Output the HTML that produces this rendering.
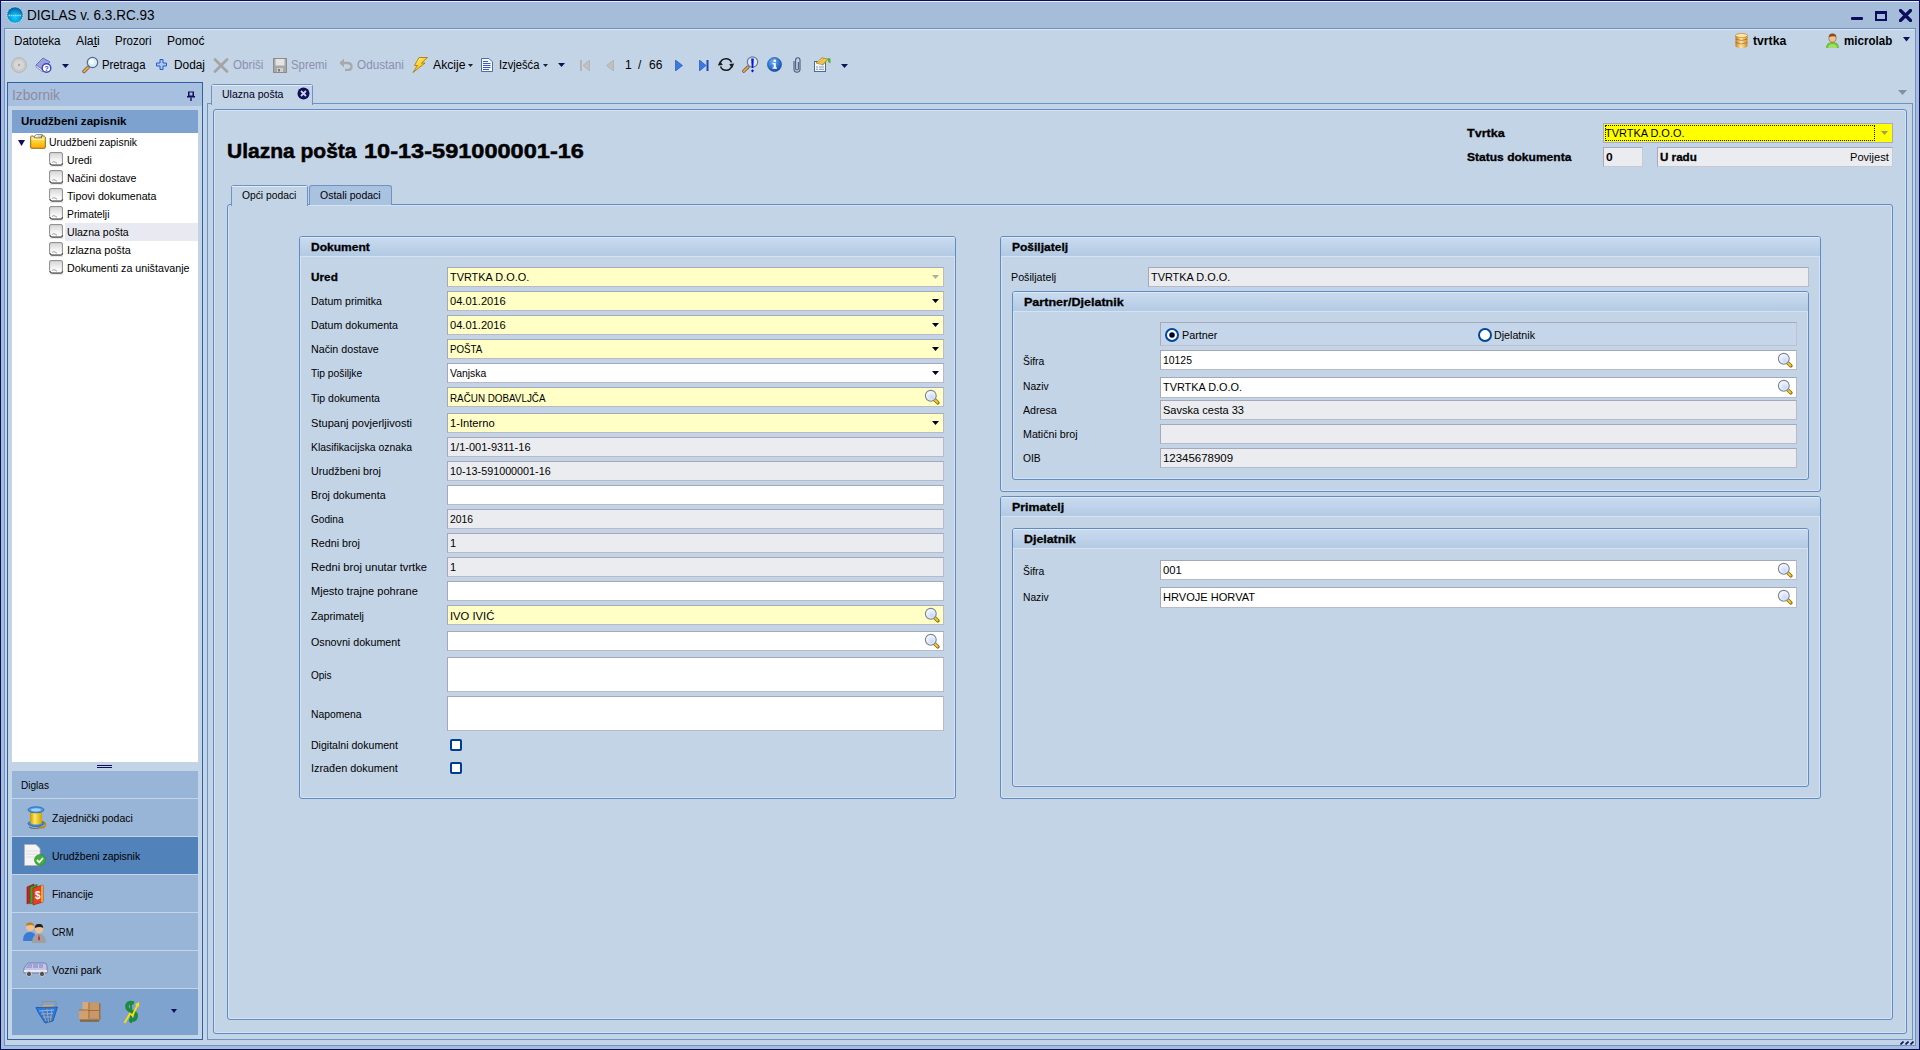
<!DOCTYPE html><html><head><meta charset="utf-8"><style>
html,body{margin:0;padding:0;}
body{width:1920px;height:1050px;position:relative;overflow:hidden;background:#a6bdda;font-family:"Liberation Sans",sans-serif;font-size:11px;color:#000;}
div{box-sizing:border-box;}
.t{position:absolute;white-space:nowrap;}
.b{font-weight:bold;transform:scaleX(1.09);transform-origin:0 0;}
.f{position:absolute;border:1px solid #a6a8ba;border-right-color:#b9b9c9;border-bottom-color:#b9b9c9;}
</style></head><body>
<div style="position:absolute;left:0px;top:0px;width:1920px;height:1050px;border:1px solid #0c0c60;background:#a6bdda;"></div>
<div style="position:absolute;left:1px;top:1px;width:1918px;height:1px;background:#e4ecf6;"></div>
<svg style="position:absolute;left:6px;top:6px" width="18" height="18" viewBox="0 0 18 18"><defs><radialGradient id="gi" cx="50%" cy="65%" r="60%"><stop offset="0" stop-color="#10d0ff"/><stop offset="0.6" stop-color="#0898d8"/><stop offset="1" stop-color="#0660a0"/></radialGradient></defs><circle cx="9" cy="9" r="8" fill="url(#gi)" stroke="#e0f0fa" stroke-width="0.8" stroke-dasharray="1.2 0.8"/><path d="M2.5 9.5 H15.5" stroke="#d0f0ff" stroke-width="1.6" stroke-dasharray="1.5 0.7" opacity="0.75"/></svg>
<div class="t" style="left:27px;top:5px;height:20px;line-height:20px;font-size:14px;color:#000;transform:scaleX(0.9655);transform-origin:0 0;">DIGLAS v. 6.3.RC.93</div>
<div style="position:absolute;left:1851px;top:17px;width:12px;height:3px;background:#0c0c60;border-radius:1px;"></div>
<div style="position:absolute;left:1875px;top:11px;width:12px;height:10px;border:2px solid #0c0c60;border-top-width:3px;"></div>
<svg style="position:absolute;left:1899px;top:9px" width="13" height="13" viewBox="0 0 13 13"><path d="M1.5 1.5 L11.5 11.5 M11.5 1.5 L1.5 11.5" stroke="#0c0c60" stroke-width="3.2" stroke-linecap="round"/></svg>
<div style="position:absolute;left:4px;top:28px;width:1912px;height:1018px;border:1px solid #6e93c3;background:#c3d4e7;"></div>
<div style="position:absolute;left:5px;top:29px;width:1910px;height:1px;background:#dce6f2;"></div>
<div class="t" style="left:14px;top:31px;height:20px;line-height:20px;font-size:12px;transform:scaleX(0.9674);transform-origin:0 0;">Datoteka</div>
<div class="t" style="left:76px;top:31px;height:20px;line-height:20px;font-size:12px;transform:scaleX(1.0182);transform-origin:0 0;">Alati</div>
<div class="t" style="left:115px;top:31px;height:20px;line-height:20px;font-size:12px;transform:scaleX(0.9591);transform-origin:0 0;">Prozori</div>
<div class="t" style="left:167px;top:31px;height:20px;line-height:20px;font-size:12px;transform:scaleX(1.0039);transform-origin:0 0;">Pomoć</div>
<div style="position:absolute;left:93px;top:46px;width:4px;height:1px;background:#000;"></div>
<svg style="position:absolute;left:1735px;top:33px" width="13" height="15" viewBox="0 0 13 15"><defs><linearGradient id="db" x1="0" x2="1"><stop offset="0" stop-color="#c87a1c"/><stop offset="0.45" stop-color="#ffe9a8"/><stop offset="1" stop-color="#d08a2a"/></linearGradient></defs><rect x="0.5" y="2" width="12" height="11" fill="url(#db)"/><ellipse cx="6.5" cy="2.5" rx="6" ry="2" fill="#ffe7a0" stroke="#b87320" stroke-width="0.6"/><ellipse cx="6.5" cy="13" rx="6" ry="2" fill="url(#db)"/><path d="M0.5 6 Q6.5 9 12.5 6 M0.5 9.5 Q6.5 12.5 12.5 9.5" stroke="#a8661a" stroke-width="0.7" fill="none"/></svg>
<div class="t" style="left:1753px;top:31px;height:20px;line-height:20px;font-size:12px;font-weight:bold;transform:scaleX(1.0178);transform-origin:0 0;">tvrtka</div>
<svg style="position:absolute;left:1825px;top:33px" width="15" height="15" viewBox="0 0 15 15"><path d="M1 15 Q1 9 7.5 9 Q14 9 14 15 Z" fill="#6fbf3a"/><path d="M3 15 Q3 11 7.5 11 Q12 11 12 15Z" fill="#9fe060"/><ellipse cx="7.5" cy="5" rx="3.6" ry="4.2" fill="#f0c090" stroke="#8a5a30" stroke-width="0.6"/><path d="M3.8 4 Q4 0.6 7.5 0.8 Q11 0.6 11.2 4 Q9 2.6 3.8 4Z" fill="#8a4a1a"/></svg>
<div class="t" style="left:1844px;top:31px;height:20px;line-height:20px;font-size:12px;font-weight:bold;transform:scaleX(0.9640);transform-origin:0 0;">microlab</div>
<svg style="position:absolute;left:1903px;top:37px" width="7" height="5" viewBox="0 0 7 5"><path d="M0 0 H7 L3.5 4.5Z" fill="#10105a"/></svg>
<svg style="position:absolute;left:11px;top:57px" width="16" height="16" viewBox="0 0 16 16"><circle cx="8" cy="8" r="7.5" fill="#c9c9c9" stroke="#b0b0b0" stroke-width="0.8"/><circle cx="8" cy="8" r="5" fill="#d6d6d6"/><circle cx="8" cy="8" r="1.2" fill="#a8a8a8"/></svg>
<svg style="position:absolute;left:35px;top:57px" width="17" height="16" viewBox="0 0 17 16"><path d="M1 8 L8 1 L15 5 L8 13 Z" fill="#9aa0e0" stroke="#5a5eb0" stroke-width="0.8"/><path d="M1 8 L1 10 L8 15 L8 13Z" fill="#e8e8f8" stroke="#5a5eb0" stroke-width="0.6"/><circle cx="11.5" cy="11" r="4.3" fill="#fff" stroke="#3a46c0" stroke-width="1.4"/><text x="9.6" y="13.8" font-size="7" font-family="Liberation Sans" font-weight="bold" fill="#3a46c0">?</text></svg>
<svg style="position:absolute;left:62px;top:64px" width="7" height="4" viewBox="0 0 7 4"><path d="M0 0 H7 L3.5 4Z" fill="#10105a"/></svg>
<svg style="position:absolute;left:81px;top:56px" width="18" height="18" viewBox="0 0 18 18"><path d="M3 15.5 L7 11.5" stroke="#6a5a40" stroke-width="3.4" stroke-linecap="round"/><path d="M3 15.5 L7 11.5" stroke="#f4a848" stroke-width="1.8" stroke-linecap="round"/><circle cx="11.5" cy="6.5" r="5.2" fill="#d4ecfc" stroke="#5a6a80" stroke-width="1.2"/><circle cx="10.5" cy="5.5" r="2.6" fill="#ffffff" opacity="0.85"/></svg>
<div class="t" style="left:102px;top:55px;height:20px;line-height:20px;font-size:12px;transform:scaleX(0.9438);transform-origin:0 0;">Pretraga</div>
<svg style="position:absolute;left:156px;top:59px" width="11" height="11" viewBox="0 0 11 11"><path d="M4 0.5 H7 V4 H10.5 V7 H7 V10.5 H4 V7 H0.5 V4 H4Z" fill="#a8c8f8" stroke="#2a5ac8" stroke-width="1"/></svg>
<div class="t" style="left:174px;top:55px;height:20px;line-height:20px;font-size:12px;transform:scaleX(0.9882);transform-origin:0 0;">Dodaj</div>
<svg style="position:absolute;left:213px;top:58px" width="16" height="15" viewBox="0 0 16 15"><path d="M2 1.5 L14 13.5 M14 1.5 L2 13.5" stroke="#a4a4a4" stroke-width="2.6" stroke-linecap="round"/></svg>
<div class="t" style="left:233px;top:55px;height:20px;line-height:20px;font-size:12px;color:#8d8fad;transform:scaleX(0.9722);transform-origin:0 0;">Obriši</div>
<svg style="position:absolute;left:273px;top:58px" width="14" height="15" viewBox="0 0 14 15"><rect x="0.5" y="0.5" width="13" height="14" fill="#a8a8a8" stroke="#8c8c8c" stroke-width="1"/><rect x="2.5" y="1" width="9" height="6.5" fill="#e4e4e4"/><rect x="4" y="10" width="6" height="4" fill="#d0d0d0"/><rect x="5" y="11" width="2" height="2.5" fill="#7a7a7a"/></svg>
<div class="t" style="left:291px;top:55px;height:20px;line-height:20px;font-size:12px;color:#8d8fad;transform:scaleX(0.9455);transform-origin:0 0;">Spremi</div>
<svg style="position:absolute;left:339px;top:58px" width="14" height="13" viewBox="0 0 14 13"><path d="M1 5 H8.5 Q12.5 5 12.5 8.5 Q12.5 12 8.5 12 H6" stroke="#a8a8a8" stroke-width="2.4" fill="none"/><path d="M0.5 5 L5 0.5 V9.5Z" fill="#a8a8a8"/></svg>
<div class="t" style="left:357px;top:55px;height:20px;line-height:20px;font-size:12px;color:#8d8fad;transform:scaleX(0.9781);transform-origin:0 0;">Odustani</div>
<svg style="position:absolute;left:412px;top:57px" width="16" height="16" viewBox="0 0 16 16"><defs><linearGradient id="lg1" x1="0" y1="0" x2="1" y2="1"><stop offset="0" stop-color="#fff6b0"/><stop offset="0.5" stop-color="#ffd020"/><stop offset="1" stop-color="#e09000"/></linearGradient></defs><path d="M7 0.5 H15.5 L9.5 6 H13 L1 15.5 L5.5 8.5 H2.5Z" fill="url(#lg1)" stroke="#a87000" stroke-width="0.8" stroke-linejoin="round"/></svg>
<div class="t" style="left:433px;top:55px;height:20px;line-height:20px;font-size:12px;transform:scaleX(1.0156);transform-origin:0 0;">Akcije</div>
<svg style="position:absolute;left:468px;top:64px" width="5" height="3" viewBox="0 0 5 3"><path d="M0 0 H5 L2.5 3Z" fill="#202030"/></svg>
<svg style="position:absolute;left:481px;top:58px" width="12" height="14" viewBox="0 0 12 14"><path d="M0.5 0.5 H8 L11.5 4 V13.5 H0.5Z" fill="#f4f8ff" stroke="#5a6a90" stroke-width="1"/><path d="M2 3.5 H7 M2 5.5 H9.5 M2 7.5 H9.5 M2 9.5 H9.5 M2 11.5 H8" stroke="#3a5ac8" stroke-width="1"/></svg>
<div class="t" style="left:499px;top:55px;height:20px;line-height:20px;font-size:12px;transform:scaleX(0.9325);transform-origin:0 0;">Izvješća</div>
<svg style="position:absolute;left:543px;top:64px" width="5" height="3" viewBox="0 0 5 3"><path d="M0 0 H5 L2.5 3Z" fill="#202030"/></svg>
<svg style="position:absolute;left:558px;top:63px" width="7" height="4" viewBox="0 0 7 4"><path d="M0 0 H7 L3.5 4Z" fill="#10105a"/></svg>
<svg style="position:absolute;left:580px;top:60px" width="10" height="11" viewBox="0 0 10 11"><rect x="0" y="0" width="2" height="11" fill="#b4b4b4"/><path d="M9.5 0 L3 5.5 L9.5 11Z" fill="#c0c0c0" stroke="#a8a8a8" stroke-width="0.6"/></svg>
<svg style="position:absolute;left:606px;top:60px" width="8" height="11" viewBox="0 0 8 11"><path d="M7.5 0 L0.5 5.5 L7.5 11Z" fill="#c0c0c0" stroke="#a8a8a8" stroke-width="0.6"/></svg>
<div class="t" style="left:625px;top:55px;height:20px;line-height:20px;font-size:12px;">1</div>
<div class="t" style="left:638px;top:55px;height:20px;line-height:20px;font-size:12px;">/</div>
<div class="t" style="left:649px;top:55px;height:20px;line-height:20px;font-size:12px;">66</div>
<svg style="position:absolute;left:675px;top:60px" width="8" height="11" viewBox="0 0 8 11"><path d="M0.5 0 L7.5 5.5 L0.5 11Z" fill="#3a7ae0" stroke="#1a4ab0" stroke-width="0.6"/></svg>
<svg style="position:absolute;left:699px;top:60px" width="10" height="11" viewBox="0 0 10 11"><path d="M0.5 0 L7 5.5 L0.5 11Z" fill="#3a7ae0" stroke="#1a4ab0" stroke-width="0.6"/><rect x="7.5" y="0" width="2" height="11" fill="#1a4ab0"/></svg>
<svg style="position:absolute;left:717px;top:56px" width="18" height="17" viewBox="0 0 18 17"><path d="M3.2 7 A6 6 0 0 1 14.5 6.5" stroke="#1a1a1a" stroke-width="1.5" fill="none"/><path d="M14.8 10 A6 6 0 0 1 3.5 10.5" stroke="#1a1a1a" stroke-width="1.5" fill="none"/><path d="M0.8 9.5 L3 5 L5.8 9Z" fill="#1a1a1a"/><path d="M12.2 8 L15 12.2 L17.2 7.5Z" fill="#1a1a1a"/></svg>
<svg style="position:absolute;left:742px;top:56px" width="17" height="18" viewBox="0 0 17 18"><path d="M1.8 15.2 L6 11" stroke="#6a5a40" stroke-width="3.2" stroke-linecap="round"/><path d="M1.8 15.2 L6 11" stroke="#f4a848" stroke-width="1.7" stroke-linecap="round"/><circle cx="10.5" cy="6" r="5.2" fill="#d4ecfc" stroke="#6a7a90" stroke-width="1.2"/><path d="M9.2 2.5 H11.8 L11.3 12 H9.7Z" fill="#1010e0"/><path d="M10.5 13.2 L12 14.8 L10.5 16.4 L9 14.8Z" fill="#1010e0"/></svg>
<svg style="position:absolute;left:767px;top:57px" width="15" height="15" viewBox="0 0 15 15"><defs><radialGradient id="ig" cx="40%" cy="30%" r="70%"><stop offset="0" stop-color="#6ab0ff"/><stop offset="1" stop-color="#1450b0"/></radialGradient></defs><circle cx="7.5" cy="7.5" r="7" fill="url(#ig)" stroke="#1a4090" stroke-width="0.6"/><circle cx="7.8" cy="3.8" r="1.4" fill="#fff"/><path d="M5.5 6 H8.8 V10.5 H10 V11.8 H5.5 V10.5 H6.7 V7.3 H5.5Z" fill="#fff"/></svg>
<svg style="position:absolute;left:792px;top:57px" width="10" height="16" viewBox="0 0 10 16"><path d="M2 4 V12 Q2 15.2 5 15.2 Q8 15.2 8 12 V3.5 Q8 0.8 5.8 0.8 Q3.6 0.8 3.6 3.5 V11.5 Q3.6 13 5 13 Q6.4 13 6.4 11.5 V5" stroke="#4a5a7a" stroke-width="1.1" fill="none"/></svg>
<svg style="position:absolute;left:814px;top:57px" width="17" height="15" viewBox="0 0 17 15"><rect x="0.5" y="4.5" width="11" height="10" fill="#f4f8ff" stroke="#4a6a98" stroke-width="1"/><path d="M2 10 H4 M5 10 H10 M2 12.3 H4 M5 12.3 H10" stroke="#7a90b8" stroke-width="1"/><path d="M2 6 L8 0.8 L14 2 L9 8Z" fill="#e0b030" stroke="#a07010" stroke-width="0.6"/><path d="M3.5 5 L9 1.5 M5 6.5 L11 2 M6.5 7.5 L12.5 2.3" stroke="#fff0a0" stroke-width="0.6"/><path d="M14 1 L16.5 1.5 V6.5 L14 5Z" fill="#50b040"/></svg>
<svg style="position:absolute;left:841px;top:64px" width="7" height="4" viewBox="0 0 7 4"><path d="M0 0 H7 L3.5 4Z" fill="#10105a"/></svg>
<div style="position:absolute;left:7px;top:82px;width:196px;height:958px;border:1px solid #2f60a2;background:#c3d4e7;"></div>
<div style="position:absolute;left:8px;top:83px;width:194px;height:23px;background:#a7c0df;"></div>
<div class="t" style="left:12px;top:84px;height:22px;line-height:22px;font-size:14px;color:#8f8a9e;transform:scaleX(0.9785);transform-origin:0 0;">Izbornik</div>
<svg style="position:absolute;left:187px;top:91px" width="8" height="10" viewBox="0 0 8 10"><path d="M1 0.5 H7 V5 H1Z M0 5 H8 V6.5 H0Z" fill="#10105a"/><rect x="2.5" y="1.5" width="3" height="3" fill="#a7c0df"/><rect x="3.3" y="6.5" width="1.4" height="3.5" fill="#10105a"/></svg>
<div style="position:absolute;left:12px;top:110px;width:186px;height:652px;background:#fff;"></div>
<div style="position:absolute;left:12px;top:110px;width:186px;height:23px;background:#7da2cf;"></div>
<div class="t" style="left:21px;top:111px;height:21px;line-height:21px;font-weight:bold;font-size:11px;transform:scaleX(1.0529);transform-origin:0 0;">Urudžbeni zapisnik</div>
<div style="position:absolute;left:65px;top:223px;width:133px;height:18px;background:#e9eaf1;"></div>
<svg style="position:absolute;left:18px;top:140px" width="7" height="6" viewBox="0 0 7 6"><path d="M0 0 H7 L3.5 6Z" fill="#10105a"/></svg>
<svg style="position:absolute;left:30px;top:133px" width="16" height="16" viewBox="0 0 16 16"><defs><linearGradient id="fg" x1="0" y1="0" x2="0" y2="1"><stop offset="0" stop-color="#fff4a0"/><stop offset="0.35" stop-color="#ffd840"/><stop offset="1" stop-color="#ffa800"/></linearGradient></defs><path d="M3.5 4 L6.5 1.5 H12.5 V7 H3.5Z" fill="#e8ecf4" stroke="#7a7a7a" stroke-width="0.8"/><rect x="8" y="2.5" width="4" height="3" fill="#c8ccd8"/><path d="M0.7 3.8 Q0.7 3 1.5 3 H3.5 L5 5 H11.5 V2.8 Q15.3 2.8 15.3 4 V14.5 Q15.3 15.3 14.5 15.3 H1.5 Q0.7 15.3 0.7 14.5Z" fill="url(#fg)" stroke="#8a5a00" stroke-width="0.9"/><rect x="1.5" y="5.5" width="13" height="1.5" fill="#fff8c0" opacity="0.7"/></svg>
<div class="t" style="left:49px;top:133px;height:18px;line-height:18px;transform:scaleX(0.9463);transform-origin:0 0;">Urudžbeni zapisnik</div>
<svg style="position:absolute;left:49px;top:152px" width="15" height="15" viewBox="0 0 15 15"><defs><linearGradient id="dg0" x1="0" y1="0" x2="0" y2="1"><stop offset="0" stop-color="#d4d4d4"/><stop offset="0.6" stop-color="#f4f4f4"/><stop offset="1" stop-color="#ffffff"/></linearGradient></defs><path d="M0.6 2 Q0.6 0.6 2 0.6 H12 Q13.4 0.6 13.4 2 V11 Q13.4 12.8 11.6 12.8 H3 Q0.6 12.8 0.6 10.5Z" fill="url(#dg0)" stroke="#8a8a8a" stroke-width="1"/><path d="M0.8 11 Q1.5 13.4 3.2 13.4 H11.6 Q13.6 13.4 13.6 11" stroke="#5a5a5a" stroke-width="1.1" fill="none"/><path d="M3 10.5 Q4.5 9 6 10 Q7 10.6 8 11.2" stroke="#8a8a8a" stroke-width="0.8" fill="none"/><rect x="1" y="13.8" width="13" height="1" fill="#e4e4e4"/></svg>
<div class="t" style="left:67px;top:151px;height:18px;line-height:18px;transform:scaleX(0.9487);transform-origin:0 0;">Uredi</div>
<svg style="position:absolute;left:49px;top:170px" width="15" height="15" viewBox="0 0 15 15"><defs><linearGradient id="dg1" x1="0" y1="0" x2="0" y2="1"><stop offset="0" stop-color="#d4d4d4"/><stop offset="0.6" stop-color="#f4f4f4"/><stop offset="1" stop-color="#ffffff"/></linearGradient></defs><path d="M0.6 2 Q0.6 0.6 2 0.6 H12 Q13.4 0.6 13.4 2 V11 Q13.4 12.8 11.6 12.8 H3 Q0.6 12.8 0.6 10.5Z" fill="url(#dg1)" stroke="#8a8a8a" stroke-width="1"/><path d="M0.8 11 Q1.5 13.4 3.2 13.4 H11.6 Q13.6 13.4 13.6 11" stroke="#5a5a5a" stroke-width="1.1" fill="none"/><path d="M3 10.5 Q4.5 9 6 10 Q7 10.6 8 11.2" stroke="#8a8a8a" stroke-width="0.8" fill="none"/><rect x="1" y="13.8" width="13" height="1" fill="#e4e4e4"/></svg>
<div class="t" style="left:67px;top:169px;height:18px;line-height:18px;transform:scaleX(0.9627);transform-origin:0 0;">Načini dostave</div>
<svg style="position:absolute;left:49px;top:188px" width="15" height="15" viewBox="0 0 15 15"><defs><linearGradient id="dg2" x1="0" y1="0" x2="0" y2="1"><stop offset="0" stop-color="#d4d4d4"/><stop offset="0.6" stop-color="#f4f4f4"/><stop offset="1" stop-color="#ffffff"/></linearGradient></defs><path d="M0.6 2 Q0.6 0.6 2 0.6 H12 Q13.4 0.6 13.4 2 V11 Q13.4 12.8 11.6 12.8 H3 Q0.6 12.8 0.6 10.5Z" fill="url(#dg2)" stroke="#8a8a8a" stroke-width="1"/><path d="M0.8 11 Q1.5 13.4 3.2 13.4 H11.6 Q13.6 13.4 13.6 11" stroke="#5a5a5a" stroke-width="1.1" fill="none"/><path d="M3 10.5 Q4.5 9 6 10 Q7 10.6 8 11.2" stroke="#8a8a8a" stroke-width="0.8" fill="none"/><rect x="1" y="13.8" width="13" height="1" fill="#e4e4e4"/></svg>
<div class="t" style="left:67px;top:187px;height:18px;line-height:18px;transform:scaleX(0.9667);transform-origin:0 0;">Tipovi dokumenata</div>
<svg style="position:absolute;left:49px;top:206px" width="15" height="15" viewBox="0 0 15 15"><defs><linearGradient id="dg3" x1="0" y1="0" x2="0" y2="1"><stop offset="0" stop-color="#d4d4d4"/><stop offset="0.6" stop-color="#f4f4f4"/><stop offset="1" stop-color="#ffffff"/></linearGradient></defs><path d="M0.6 2 Q0.6 0.6 2 0.6 H12 Q13.4 0.6 13.4 2 V11 Q13.4 12.8 11.6 12.8 H3 Q0.6 12.8 0.6 10.5Z" fill="url(#dg3)" stroke="#8a8a8a" stroke-width="1"/><path d="M0.8 11 Q1.5 13.4 3.2 13.4 H11.6 Q13.6 13.4 13.6 11" stroke="#5a5a5a" stroke-width="1.1" fill="none"/><path d="M3 10.5 Q4.5 9 6 10 Q7 10.6 8 11.2" stroke="#8a8a8a" stroke-width="0.8" fill="none"/><rect x="1" y="13.8" width="13" height="1" fill="#e4e4e4"/></svg>
<div class="t" style="left:67px;top:205px;height:18px;line-height:18px;transform:scaleX(0.9382);transform-origin:0 0;">Primatelji</div>
<svg style="position:absolute;left:49px;top:224px" width="15" height="15" viewBox="0 0 15 15"><defs><linearGradient id="dg4" x1="0" y1="0" x2="0" y2="1"><stop offset="0" stop-color="#d4d4d4"/><stop offset="0.6" stop-color="#f4f4f4"/><stop offset="1" stop-color="#ffffff"/></linearGradient></defs><path d="M0.6 2 Q0.6 0.6 2 0.6 H12 Q13.4 0.6 13.4 2 V11 Q13.4 12.8 11.6 12.8 H3 Q0.6 12.8 0.6 10.5Z" fill="url(#dg4)" stroke="#8a8a8a" stroke-width="1"/><path d="M0.8 11 Q1.5 13.4 3.2 13.4 H11.6 Q13.6 13.4 13.6 11" stroke="#5a5a5a" stroke-width="1.1" fill="none"/><path d="M3 10.5 Q4.5 9 6 10 Q7 10.6 8 11.2" stroke="#8a8a8a" stroke-width="0.8" fill="none"/><rect x="1" y="13.8" width="13" height="1" fill="#e4e4e4"/></svg>
<div class="t" style="left:67px;top:223px;height:18px;line-height:18px;transform:scaleX(0.9617);transform-origin:0 0;">Ulazna pošta</div>
<svg style="position:absolute;left:49px;top:242px" width="15" height="15" viewBox="0 0 15 15"><defs><linearGradient id="dg5" x1="0" y1="0" x2="0" y2="1"><stop offset="0" stop-color="#d4d4d4"/><stop offset="0.6" stop-color="#f4f4f4"/><stop offset="1" stop-color="#ffffff"/></linearGradient></defs><path d="M0.6 2 Q0.6 0.6 2 0.6 H12 Q13.4 0.6 13.4 2 V11 Q13.4 12.8 11.6 12.8 H3 Q0.6 12.8 0.6 10.5Z" fill="url(#dg5)" stroke="#8a8a8a" stroke-width="1"/><path d="M0.8 11 Q1.5 13.4 3.2 13.4 H11.6 Q13.6 13.4 13.6 11" stroke="#5a5a5a" stroke-width="1.1" fill="none"/><path d="M3 10.5 Q4.5 9 6 10 Q7 10.6 8 11.2" stroke="#8a8a8a" stroke-width="0.8" fill="none"/><rect x="1" y="13.8" width="13" height="1" fill="#e4e4e4"/></svg>
<div class="t" style="left:67px;top:241px;height:18px;line-height:18px;transform:scaleX(0.9839);transform-origin:0 0;">Izlazna pošta</div>
<svg style="position:absolute;left:49px;top:260px" width="15" height="15" viewBox="0 0 15 15"><defs><linearGradient id="dg6" x1="0" y1="0" x2="0" y2="1"><stop offset="0" stop-color="#d4d4d4"/><stop offset="0.6" stop-color="#f4f4f4"/><stop offset="1" stop-color="#ffffff"/></linearGradient></defs><path d="M0.6 2 Q0.6 0.6 2 0.6 H12 Q13.4 0.6 13.4 2 V11 Q13.4 12.8 11.6 12.8 H3 Q0.6 12.8 0.6 10.5Z" fill="url(#dg6)" stroke="#8a8a8a" stroke-width="1"/><path d="M0.8 11 Q1.5 13.4 3.2 13.4 H11.6 Q13.6 13.4 13.6 11" stroke="#5a5a5a" stroke-width="1.1" fill="none"/><path d="M3 10.5 Q4.5 9 6 10 Q7 10.6 8 11.2" stroke="#8a8a8a" stroke-width="0.8" fill="none"/><rect x="1" y="13.8" width="13" height="1" fill="#e4e4e4"/></svg>
<div class="t" style="left:67px;top:259px;height:18px;line-height:18px;transform:scaleX(0.9722);transform-origin:0 0;">Dokumenti za uništavanje</div>
<div style="position:absolute;left:97px;top:765px;width:15px;height:1px;background:#10105a;"></div>
<div style="position:absolute;left:97px;top:767px;width:15px;height:1px;background:#10105a;"></div>
<div style="position:absolute;left:12px;top:771px;width:186px;height:27px;background:#98b4d6;"></div>
<div class="t" style="left:21px;top:775px;height:20px;line-height:20px;transform:scaleX(0.9128);transform-origin:0 0;">Diglas</div>
<div style="position:absolute;left:12px;top:799px;width:186px;height:37px;background:#98b4d6;"></div>
<div class="t" style="left:52px;top:808px;height:20px;line-height:20px;transform:scaleX(0.9500);transform-origin:0 0;">Zajednički podaci</div>
<div style="position:absolute;left:12px;top:837px;width:186px;height:37px;background:#5282ba;"></div>
<div class="t" style="left:52px;top:846px;height:20px;line-height:20px;transform:scaleX(0.9485);transform-origin:0 0;">Urudžbeni zapisnik</div>
<div style="position:absolute;left:12px;top:875px;width:186px;height:37px;background:#98b4d6;"></div>
<div class="t" style="left:52px;top:884px;height:20px;line-height:20px;transform:scaleX(0.9365);transform-origin:0 0;">Financije</div>
<div style="position:absolute;left:12px;top:913px;width:186px;height:37px;background:#98b4d6;"></div>
<div class="t" style="left:52px;top:922px;height:20px;line-height:20px;transform:scaleX(0.8644);transform-origin:0 0;">CRM</div>
<div style="position:absolute;left:12px;top:951px;width:186px;height:37px;background:#98b4d6;"></div>
<div class="t" style="left:52px;top:960px;height:20px;line-height:20px;transform:scaleX(0.9588);transform-origin:0 0;">Vozni park</div>
<div style="position:absolute;left:12px;top:989px;width:186px;height:46px;background:#7ea3cf;"></div>
<svg style="position:absolute;left:26px;top:806px" width="22" height="24" viewBox="0 0 22 24"><defs><linearGradient id="sp" x1="0" x2="1"><stop offset="0" stop-color="#c89800"/><stop offset="0.4" stop-color="#ffe860"/><stop offset="1" stop-color="#d0a000"/></linearGradient></defs><path d="M3 21 Q8 24 16 21" stroke="#707070" stroke-width="1.2" fill="none"/><path d="M14 15 Q21 16 19 20 Q17 23 12 21" stroke="#c08a00" stroke-width="1.6" fill="none"/><rect x="4" y="4" width="12" height="14" fill="url(#sp)"/><ellipse cx="10" cy="17.5" rx="8" ry="3" fill="#3a8ae0" stroke="#1a5aa0" stroke-width="0.7"/><ellipse cx="10" cy="16.5" rx="6" ry="2" fill="url(#sp)"/><rect x="4" y="4" width="12" height="12.5" fill="url(#sp)"/><ellipse cx="10" cy="3.8" rx="8" ry="3" fill="#4a9af0" stroke="#1a5aa0" stroke-width="0.7"/><ellipse cx="10" cy="3.8" rx="5" ry="1.6" fill="#a0d0ff"/></svg>
<svg style="position:absolute;left:23px;top:843px" width="24" height="24" viewBox="0 0 24 24"><path d="M1.5 1.5 H13 L17 5.5 V22.5 H1.5Z" fill="#f4f4f4" stroke="#b0b0b0" stroke-width="0.8"/><path d="M3 8 H15 M3 11 H15 M3 14 H12" stroke="#d8d8d8" stroke-width="0.8"/><circle cx="17" cy="17" r="5.5" fill="#3fb03a" stroke="#2a8a2a" stroke-width="0.6"/><path d="M14 17 L16.3 19.3 L20 15" stroke="#fff" stroke-width="1.8" fill="none"/></svg>
<svg style="position:absolute;left:26px;top:882px" width="20" height="24" viewBox="0 0 20 24"><path d="M1 5 L8 2 V19 L1 22Z" fill="#d02020" stroke="#801010" stroke-width="0.6"/><path d="M4 5 L11 2.5 V19.5 L4 22Z" fill="#40a030" stroke="#206010" stroke-width="0.6"/><path d="M7 6 L17 3 V20 L7 23Z" fill="#e84020" stroke="#901808" stroke-width="0.6"/><path d="M15 3.5 L17 3 V20 L15 20.6Z" fill="#ffa020"/><text x="9" y="17" font-size="10" font-weight="bold" fill="#fff" font-family="Liberation Sans">$</text></svg>
<svg style="position:absolute;left:23px;top:921px" width="24" height="22" viewBox="0 0 24 22"><circle cx="7" cy="6" r="4" fill="#f0c090"/><path d="M3 5 Q3 1 7 1.5 Q11 1 11 5 Q8 3 3 5Z" fill="#c08020"/><path d="M0 20 Q0 11 7 11 Q13 11 13 18 V20Z" fill="#3a7ad0"/><circle cx="16" cy="8" r="4.2" fill="#f0c090"/><path d="M11.8 7 Q12 2.5 16 3 Q20 2.5 20.2 7 Q17 5 11.8 7Z" fill="#202020"/><path d="M9 22 Q9 13 16 13 Q23 13 23 22Z" fill="#a0a0a0"/><path d="M16 13 L15 18 L16 20 L17 18Z" fill="#d02020"/></svg>
<svg style="position:absolute;left:23px;top:960px" width="25" height="18" viewBox="0 0 25 18"><path d="M1 13 V8 L5 3 H21 Q24 3 24 6 V13Z" fill="#c4c4e4" stroke="#7070a0" stroke-width="0.8"/><path d="M5.5 4 L2.5 8 H9 V4Z M10 4 H15 V8 H10Z M16 4 H20 V8 H16Z" fill="#9aa4d8"/><rect x="1" y="10" width="23" height="2" fill="#e8e8f8"/><circle cx="6" cy="14" r="2.6" fill="#505050" stroke="#e0e0e0" stroke-width="0.8"/><circle cx="19" cy="14" r="2.6" fill="#505050" stroke="#e0e0e0" stroke-width="0.8"/></svg>
<svg style="position:absolute;left:35px;top:1000px" width="25" height="24" viewBox="0 0 25 24"><path d="M7 6 V1.5 H21 V6" stroke="#909090" stroke-width="1" fill="none"/><path d="M4 8 L9 5 H18 L21 8Z" fill="#d8a868"/><path d="M1 7.5 L22.5 7 L18 21 L10 23 L3 12Z" fill="#2a7ae0" stroke="#1a50b0" stroke-width="0.8"/><path d="M4 11 L19 10 M6 14 L18 13.5 M8 17 L17 17" stroke="#80c0ff" stroke-width="0.9"/><path d="M7 10 L11 21 M12 9 L13.5 22 M17 9 L15.5 21" stroke="#d8a060" stroke-width="1.2" opacity="0.8"/></svg>
<svg style="position:absolute;left:78px;top:1001px" width="24" height="22" viewBox="0 0 24 22"><path d="M0.5 17.5 L3 20.5 H21 L23 17.5Z" fill="#a08050"/><path d="M2 20 H21" stroke="#705030" stroke-width="1"/><rect x="1" y="9" width="10" height="9" fill="#d0a070"/><rect x="10" y="1.5" width="11" height="16" fill="#c89868"/><rect x="4.5" y="1" width="6" height="8" fill="#d8a878"/><path d="M10 9.5 H21 M11 1.5 V17.5 M1 9 H10" stroke="#8a6030" stroke-width="0.7"/><path d="M21 1.5 L22.5 3 V18 L21 17.5Z" fill="#987048"/></svg>
<svg style="position:absolute;left:123px;top:1000px" width="18" height="24" viewBox="0 0 18 24"><path d="M11 3 Q4 1.5 4 6.5 Q4 10 9 11.5 Q14 13 13 17 Q12 21 6 20" stroke="#1e8a40" stroke-width="3.6" fill="none"/><path d="M8 1 V23" stroke="#1e8a40" stroke-width="2"/><path d="M1.5 23 L7 13.5 L9.5 15.5 L14.5 5" stroke="#ffe000" stroke-width="1.8" fill="none"/><path d="M12 4.5 L16 2 L16.2 7Z" fill="#ffe000"/></svg>
<svg style="position:absolute;left:171px;top:1009px" width="6" height="4" viewBox="0 0 6 4"><path d="M0 0 H6 L3.0 4Z" fill="#10105a"/></svg>
<div style="position:absolute;left:207px;top:103px;width:1706px;height:937px;border:1px solid #6e93c3;background:#c3d4e7;"></div>
<div style="position:absolute;left:211px;top:84px;width:102px;height:21px;border:1px solid #6e93c3;border-bottom:none;border-radius:3px 3px 0 0;background:#c3d4e7;"></div>
<div style="position:absolute;left:212px;top:85px;width:100px;height:1px;background:#e2ebf6;"></div>
<div class="t" style="left:222px;top:84px;height:20px;line-height:20px;font-size:11px;color:#000018;transform:scaleX(0.9570);transform-origin:0 0;">Ulazna pošta</div>
<svg style="position:absolute;left:297px;top:87px" width="13" height="13" viewBox="0 0 13 13"><circle cx="6.5" cy="6.5" r="6" fill="#10105a"/><path d="M4 4 L9 9 M9 4 L4 9" stroke="#c8d4f0" stroke-width="1.8"/></svg>
<svg style="position:absolute;left:1898px;top:90px" width="9" height="5" viewBox="0 0 9 5"><path d="M0 0 H9 L4.5 5Z" fill="#8090a8"/></svg>
<div style="position:absolute;left:213px;top:109px;width:1694px;height:925px;border:1px solid #5f8cc5;border-radius:3px;background:#c3d4e7;box-shadow:inset 0 0 0 1px #d6e2ef;"></div>
<div class="t" style="left:227px;top:138px;height:26px;line-height:26px;font-size:21px;font-weight:bold;-webkit-text-stroke:0.5px #000;">Ulazna pošta</div>
<div class="t" style="left:364px;top:138px;height:26px;line-height:26px;font-size:21px;font-weight:bold;-webkit-text-stroke:0.5px #000;transform:scaleX(1.121);transform-origin:0 0;">10-13-591000001-16</div>
<div class="t" style="left:1467px;top:123px;height:20px;line-height:20px;font-weight:bold;-webkit-text-stroke:0.3px #000;transform:scaleX(1.1395);transform-origin:0 0;">Tvrtka</div>
<div class="t" style="left:1467px;top:147px;height:20px;line-height:20px;font-weight:bold;-webkit-text-stroke:0.3px #000;transform:scaleX(1.0942);transform-origin:0 0;">Status dokumenta</div>
<div style="position:absolute;left:1603px;top:123px;width:290px;height:20px;background:#ffff00;border:1px solid #a9a9bd;"></div>
<div style="position:absolute;left:1605px;top:125px;width:270px;height:16px;border:1px dotted #101010;"></div>
<div class="t" style="left:1605px;top:123px;height:20px;line-height:20px;color:#000;transform:scaleX(0.9952);transform-origin:0 0;">TVRTKA D.O.O.</div>
<svg style="position:absolute;left:1881px;top:131px" width="7" height="4" viewBox="0 0 7 4"><path d="M0 0 H7 L3.5 4Z" fill="#9a9a6a"/></svg>
<div style="position:absolute;left:1603px;top:147px;width:40px;height:20px;background:#ebecf0;border:1px solid #a9a9bd;border-right-color:#c9c9d3;border-bottom-color:#c9c9d3;"></div>
<div class="t" style="left:1606px;top:147px;height:20px;line-height:20px;font-weight:bold;transform:scaleX(1.09);transform-origin:0 0;">0</div>
<div style="position:absolute;left:1657px;top:147px;width:236px;height:20px;background:#ebecf0;border:1px solid #a9a9bd;border-right-color:#c9c9d3;border-bottom-color:#c9c9d3;"></div>
<div class="t" style="left:1660px;top:147px;height:20px;line-height:20px;font-weight:bold;-webkit-text-stroke:0.3px #000;transform:scaleX(1.0563);transform-origin:0 0;">U radu</div>
<div class="t" style="left:1850px;top:147px;height:20px;line-height:20px;transform:scaleX(1.0058);transform-origin:0 0;">Povijest</div>
<div style="position:absolute;left:227px;top:204px;width:1666px;height:816px;border:1px solid #5f8cc5;border-radius:3px;background:#c3d4e7;box-shadow:inset 0 0 0 1px #d6e2ef;"></div>
<div style="position:absolute;left:309px;top:185px;width:83px;height:20px;border:1px solid #6e93c3;border-bottom:none;border-radius:3px 3px 0 0;background:#a9c2e0;"></div>
<div style="position:absolute;left:231px;top:185px;width:77px;height:21px;border:1px solid #6e93c3;border-bottom:none;border-radius:3px 3px 0 0;background:#c3d4e7;"></div>
<div style="position:absolute;left:232px;top:186px;width:75px;height:1px;background:#e2ebf6;"></div>
<div class="t" style="left:242px;top:185px;height:20px;line-height:20px;transform:scaleX(0.9353);transform-origin:0 0;">Opći podaci</div>
<div class="t" style="left:320px;top:185px;height:20px;line-height:20px;transform:scaleX(0.9538);transform-origin:0 0;">Ostali podaci</div>
<div style="position:absolute;left:299px;top:236px;width:657px;height:563px;border:1px solid #5f8cc5;border-radius:3px;background:#c3d4e7;box-shadow:inset 0 0 0 1px #d6e2ef;"></div>
<div style="position:absolute;left:300px;top:237px;width:655px;height:19px;background:linear-gradient(#c9daee,#b3cae4);border-top:1px solid #dfe9f5;border-radius:2px 2px 0 0;"></div>
<div style="position:absolute;left:300px;top:256px;width:655px;height:1px;background:#d6e2ef;"></div>
<div class="t" style="left:311px;top:237px;height:20px;line-height:20px;font-weight:bold;-webkit-text-stroke:0.3px #000;transform:scaleX(1.0932);transform-origin:0 0;">Dokument</div>
<div class="t" style="left:311px;top:267px;height:20px;line-height:20px;font-weight:bold;-webkit-text-stroke:0.3px #000;transform:scaleX(1.0722);transform-origin:0 0;">Ured</div>
<div class="f" style="left:447px;top:267px;width:497px;height:20px;background:#ffffc6;"></div>
<div class="t" style="left:450px;top:267px;height:20px;line-height:20px;transform:scaleX(0.9914);transform-origin:0 0;">TVRTKA D.O.O.</div>
<svg style="position:absolute;left:932px;top:275px" width="7" height="4" viewBox="0 0 7 4"><path d="M0 0 H7 L3.5 4Z" fill="#a8b0a8"/></svg>
<div class="t" style="left:311px;top:291px;height:20px;line-height:20px;transform:scaleX(0.9593);transform-origin:0 0;">Datum primitka</div>
<div class="f" style="left:447px;top:291px;width:497px;height:20px;background:#ffffc6;"></div>
<div class="t" style="left:450px;top:291px;height:20px;line-height:20px;transform:scaleX(1.0099);transform-origin:0 0;">04.01.2016</div>
<svg style="position:absolute;left:932px;top:299px" width="7" height="4" viewBox="0 0 7 4"><path d="M0 0 H7 L3.5 4Z" fill="#000020"/></svg>
<div class="t" style="left:311px;top:315px;height:20px;line-height:20px;transform:scaleX(0.9675);transform-origin:0 0;">Datum dokumenta</div>
<div class="f" style="left:447px;top:315px;width:497px;height:20px;background:#ffffc6;"></div>
<div class="t" style="left:450px;top:315px;height:20px;line-height:20px;transform:scaleX(1.0099);transform-origin:0 0;">04.01.2016</div>
<svg style="position:absolute;left:932px;top:323px" width="7" height="4" viewBox="0 0 7 4"><path d="M0 0 H7 L3.5 4Z" fill="#000020"/></svg>
<div class="t" style="left:311px;top:339px;height:20px;line-height:20px;transform:scaleX(0.9706);transform-origin:0 0;">Način dostave</div>
<div class="f" style="left:447px;top:339px;width:497px;height:20px;background:#ffffc6;"></div>
<div class="t" style="left:450px;top:339px;height:20px;line-height:20px;transform:scaleX(0.8877);transform-origin:0 0;">POŠTA</div>
<svg style="position:absolute;left:932px;top:347px" width="7" height="4" viewBox="0 0 7 4"><path d="M0 0 H7 L3.5 4Z" fill="#000020"/></svg>
<div class="t" style="left:311px;top:363px;height:20px;line-height:20px;transform:scaleX(0.9380);transform-origin:0 0;">Tip pošiljke</div>
<div class="f" style="left:447px;top:363px;width:497px;height:20px;background:#ffffff;"></div>
<div class="t" style="left:450px;top:363px;height:20px;line-height:20px;transform:scaleX(0.9457);transform-origin:0 0;">Vanjska</div>
<svg style="position:absolute;left:932px;top:371px" width="7" height="4" viewBox="0 0 7 4"><path d="M0 0 H7 L3.5 4Z" fill="#000020"/></svg>
<div class="t" style="left:311px;top:388px;height:20px;line-height:20px;transform:scaleX(0.9529);transform-origin:0 0;">Tip dokumenta</div>
<div class="f" style="left:447px;top:387px;width:497px;height:20px;background:#ffffc6;"></div>
<div class="t" style="left:450px;top:388px;height:20px;line-height:20px;transform:scaleX(0.8944);transform-origin:0 0;">RAČUN DOBAVLJČA</div>
<svg style="position:absolute;left:924px;top:389px" width="16" height="16" viewBox="0 0 16 16"><defs><radialGradient id="sg924389" cx="60%" cy="65%" r="70%"><stop offset="0" stop-color="#c8d8f8"/><stop offset="1" stop-color="#ffffff"/></radialGradient></defs><path d="M10.5 10.5 L13.8 13.8" stroke="#8a6a10" stroke-width="3.6" stroke-linecap="round"/><path d="M10.8 10.8 L13.5 13.5" stroke="#f0c830" stroke-width="2" stroke-linecap="round"/><circle cx="6.8" cy="6.8" r="5.4" fill="url(#sg924389)" stroke="#7a8490" stroke-width="1.1"/></svg>
<div class="t" style="left:311px;top:413px;height:20px;line-height:20px;transform:scaleX(1.0072);transform-origin:0 0;">Stupanj povjerljivosti</div>
<div class="f" style="left:447px;top:413px;width:497px;height:20px;background:#ffffc6;"></div>
<div class="t" style="left:450px;top:413px;height:20px;line-height:20px;transform:scaleX(1.0132);transform-origin:0 0;">1-Interno</div>
<svg style="position:absolute;left:932px;top:421px" width="7" height="4" viewBox="0 0 7 4"><path d="M0 0 H7 L3.5 4Z" fill="#000020"/></svg>
<div class="t" style="left:311px;top:437px;height:20px;line-height:20px;transform:scaleX(0.9434);transform-origin:0 0;">Klasifikacijska oznaka</div>
<div class="f" style="left:447px;top:437px;width:497px;height:20px;background:#ebecf0;"></div>
<div class="t" style="left:450px;top:437px;height:20px;line-height:20px;transform:scaleX(0.9996);transform-origin:0 0;">1/1-001-9311-16</div>
<div class="t" style="left:311px;top:461px;height:20px;line-height:20px;transform:scaleX(0.9781);transform-origin:0 0;">Urudžbeni broj</div>
<div class="f" style="left:447px;top:461px;width:497px;height:20px;background:#ebecf0;"></div>
<div class="t" style="left:450px;top:461px;height:20px;line-height:20px;transform:scaleX(0.9797);transform-origin:0 0;">10-13-591000001-16</div>
<div class="t" style="left:311px;top:485px;height:20px;line-height:20px;transform:scaleX(0.9678);transform-origin:0 0;">Broj dokumenta</div>
<div class="f" style="left:447px;top:485px;width:497px;height:20px;background:#ffffff;"></div>
<div class="t" style="left:311px;top:509px;height:20px;line-height:20px;transform:scaleX(0.9193);transform-origin:0 0;">Godina</div>
<div class="f" style="left:447px;top:509px;width:497px;height:20px;background:#ebecf0;"></div>
<div class="t" style="left:450px;top:509px;height:20px;line-height:20px;transform:scaleX(0.9368);transform-origin:0 0;">2016</div>
<div class="t" style="left:311px;top:533px;height:20px;line-height:20px;transform:scaleX(0.9768);transform-origin:0 0;">Redni broj</div>
<div class="f" style="left:447px;top:533px;width:497px;height:20px;background:#ebecf0;"></div>
<div class="t" style="left:450px;top:533px;height:20px;line-height:20px;">1</div>
<div class="t" style="left:311px;top:557px;height:20px;line-height:20px;transform:scaleX(1.0146);transform-origin:0 0;">Redni broj unutar tvrtke</div>
<div class="f" style="left:447px;top:557px;width:497px;height:20px;background:#ebecf0;"></div>
<div class="t" style="left:450px;top:557px;height:20px;line-height:20px;">1</div>
<div class="t" style="left:311px;top:581px;height:20px;line-height:20px;transform:scaleX(1.0037);transform-origin:0 0;">Mjesto trajne pohrane</div>
<div class="f" style="left:447px;top:581px;width:497px;height:20px;background:#ffffff;"></div>
<div class="t" style="left:311px;top:606px;height:20px;line-height:20px;transform:scaleX(0.9737);transform-origin:0 0;">Zaprimatelj</div>
<div class="f" style="left:447px;top:605px;width:497px;height:20px;background:#ffffc6;"></div>
<div class="t" style="left:450px;top:606px;height:20px;line-height:20px;transform:scaleX(1.0211);transform-origin:0 0;">IVO IVIĆ</div>
<svg style="position:absolute;left:924px;top:607px" width="16" height="16" viewBox="0 0 16 16"><defs><radialGradient id="sg924607" cx="60%" cy="65%" r="70%"><stop offset="0" stop-color="#c8d8f8"/><stop offset="1" stop-color="#ffffff"/></radialGradient></defs><path d="M10.5 10.5 L13.8 13.8" stroke="#8a6a10" stroke-width="3.6" stroke-linecap="round"/><path d="M10.8 10.8 L13.5 13.5" stroke="#f0c830" stroke-width="2" stroke-linecap="round"/><circle cx="6.8" cy="6.8" r="5.4" fill="url(#sg924607)" stroke="#7a8490" stroke-width="1.1"/></svg>
<div class="t" style="left:311px;top:632px;height:20px;line-height:20px;transform:scaleX(0.9722);transform-origin:0 0;">Osnovni dokument</div>
<div class="f" style="left:447px;top:631px;width:497px;height:20px;background:#ffffff;"></div>
<svg style="position:absolute;left:924px;top:633px" width="16" height="16" viewBox="0 0 16 16"><defs><radialGradient id="sg924633" cx="60%" cy="65%" r="70%"><stop offset="0" stop-color="#c8d8f8"/><stop offset="1" stop-color="#ffffff"/></radialGradient></defs><path d="M10.5 10.5 L13.8 13.8" stroke="#8a6a10" stroke-width="3.6" stroke-linecap="round"/><path d="M10.8 10.8 L13.5 13.5" stroke="#f0c830" stroke-width="2" stroke-linecap="round"/><circle cx="6.8" cy="6.8" r="5.4" fill="url(#sg924633)" stroke="#7a8490" stroke-width="1.1"/></svg>
<div class="t" style="left:311px;top:665px;height:20px;line-height:20px;transform:scaleX(0.9110);transform-origin:0 0;">Opis</div>
<div class="f" style="left:447px;top:657px;width:497px;height:35px;background:#ffffff;"></div>
<div class="t" style="left:311px;top:704px;height:20px;line-height:20px;transform:scaleX(0.9408);transform-origin:0 0;">Napomena</div>
<div class="f" style="left:447px;top:696px;width:497px;height:35px;background:#ffffff;"></div>
<div class="t" style="left:311px;top:735px;height:20px;line-height:20px;transform:scaleX(0.9598);transform-origin:0 0;">Digitalni dokument</div>
<div style="position:absolute;left:450px;top:739px;width:12px;height:12px;border:2px solid #003d8f;border-radius:2px;background:#fff;"></div>
<div class="t" style="left:311px;top:758px;height:20px;line-height:20px;transform:scaleX(0.9866);transform-origin:0 0;">Izrađen dokument</div>
<div style="position:absolute;left:450px;top:762px;width:12px;height:12px;border:2px solid #003d8f;border-radius:2px;background:#fff;"></div>
<div style="position:absolute;left:1000px;top:236px;width:821px;height:256px;border:1px solid #5f8cc5;border-radius:3px;background:#c3d4e7;box-shadow:inset 0 0 0 1px #d6e2ef;"></div>
<div style="position:absolute;left:1001px;top:237px;width:819px;height:19px;background:linear-gradient(#c9daee,#b3cae4);border-top:1px solid #dfe9f5;border-radius:2px 2px 0 0;"></div>
<div style="position:absolute;left:1001px;top:256px;width:819px;height:1px;background:#d6e2ef;"></div>
<div class="t" style="left:1012px;top:237px;height:20px;line-height:20px;font-weight:bold;-webkit-text-stroke:0.3px #000;transform:scaleX(1.0922);transform-origin:0 0;">Pošiljatelj</div>
<div class="t" style="left:1011px;top:267px;height:20px;line-height:20px;transform:scaleX(0.9721);transform-origin:0 0;">Pošiljatelj</div>
<div class="f" style="left:1148px;top:267px;width:661px;height:20px;background:#ebecf0;"></div>
<div class="t" style="left:1151px;top:267px;height:20px;line-height:20px;transform:scaleX(0.9914);transform-origin:0 0;">TVRTKA D.O.O.</div>
<div style="position:absolute;left:1012px;top:291px;width:797px;height:189px;border:1px solid #5f8cc5;border-radius:3px;background:#c3d4e7;box-shadow:inset 0 0 0 1px #d6e2ef;"></div>
<div style="position:absolute;left:1013px;top:292px;width:795px;height:19px;background:linear-gradient(#c9daee,#b3cae4);border-top:1px solid #dfe9f5;border-radius:2px 2px 0 0;"></div>
<div style="position:absolute;left:1013px;top:311px;width:795px;height:1px;background:#d6e2ef;"></div>
<div class="t" style="left:1024px;top:292px;height:20px;line-height:20px;font-weight:bold;-webkit-text-stroke:0.3px #000;transform:scaleX(1.1409);transform-origin:0 0;">Partner/Djelatnik</div>
<div style="position:absolute;left:1160px;top:322px;width:637px;height:24px;border:1px solid #a9a9bd;border-right-color:#c0c0cc;border-bottom-color:#c0c0cc;background:#c6d6ea;"></div>
<svg style="position:absolute;left:1165px;top:328px" width="14" height="14" viewBox="0 0 14 14"><circle cx="7" cy="7" r="6" fill="#fff" stroke="#00469a" stroke-width="2"/><circle cx="7" cy="7" r="2.8" fill="#000030"/></svg>
<div class="t" style="left:1182px;top:325px;height:20px;line-height:20px;transform:scaleX(0.9835);transform-origin:0 0;">Partner</div>
<svg style="position:absolute;left:1478px;top:328px" width="14" height="14" viewBox="0 0 14 14"><circle cx="7" cy="7" r="6" fill="#fff" stroke="#00469a" stroke-width="2"/></svg>
<div class="t" style="left:1494px;top:325px;height:20px;line-height:20px;transform:scaleX(0.9712);transform-origin:0 0;">Djelatnik</div>
<div class="t" style="left:1023px;top:351px;height:20px;line-height:20px;transform:scaleX(0.9434);transform-origin:0 0;">Šifra</div>
<div class="f" style="left:1160px;top:350px;width:637px;height:20px;background:#ffffff;"></div>
<div class="t" style="left:1163px;top:350px;height:20px;line-height:20px;transform:scaleX(0.9461);transform-origin:0 0;">10125</div>
<svg style="position:absolute;left:1777px;top:352px" width="16" height="16" viewBox="0 0 16 16"><defs><radialGradient id="sg1777352" cx="60%" cy="65%" r="70%"><stop offset="0" stop-color="#c8d8f8"/><stop offset="1" stop-color="#ffffff"/></radialGradient></defs><path d="M10.5 10.5 L13.8 13.8" stroke="#8a6a10" stroke-width="3.6" stroke-linecap="round"/><path d="M10.8 10.8 L13.5 13.5" stroke="#f0c830" stroke-width="2" stroke-linecap="round"/><circle cx="6.8" cy="6.8" r="5.4" fill="url(#sg1777352)" stroke="#7a8490" stroke-width="1.1"/></svg>
<div class="t" style="left:1023px;top:376px;height:21px;line-height:21px;transform:scaleX(0.9315);transform-origin:0 0;">Naziv</div>
<div class="f" style="left:1160px;top:377px;width:637px;height:21px;background:#ffffff;"></div>
<div class="t" style="left:1163px;top:377px;height:21px;line-height:21px;transform:scaleX(0.9889);transform-origin:0 0;">TVRTKA D.O.O.</div>
<svg style="position:absolute;left:1777px;top:379px" width="16" height="16" viewBox="0 0 16 16"><defs><radialGradient id="sg1777379" cx="60%" cy="65%" r="70%"><stop offset="0" stop-color="#c8d8f8"/><stop offset="1" stop-color="#ffffff"/></radialGradient></defs><path d="M10.5 10.5 L13.8 13.8" stroke="#8a6a10" stroke-width="3.6" stroke-linecap="round"/><path d="M10.8 10.8 L13.5 13.5" stroke="#f0c830" stroke-width="2" stroke-linecap="round"/><circle cx="6.8" cy="6.8" r="5.4" fill="url(#sg1777379)" stroke="#7a8490" stroke-width="1.1"/></svg>
<div class="t" style="left:1023px;top:400px;height:20px;line-height:20px;transform:scaleX(0.9687);transform-origin:0 0;">Adresa</div>
<div class="f" style="left:1160px;top:400px;width:637px;height:20px;background:#ebecf0;"></div>
<div class="t" style="left:1163px;top:400px;height:20px;line-height:20px;transform:scaleX(1.0035);transform-origin:0 0;">Savska cesta 33</div>
<div class="t" style="left:1023px;top:424px;height:20px;line-height:20px;transform:scaleX(0.9719);transform-origin:0 0;">Matični broj</div>
<div class="f" style="left:1160px;top:424px;width:637px;height:20px;background:#ebecf0;"></div>
<div class="t" style="left:1023px;top:448px;height:20px;line-height:20px;transform:scaleX(0.9358);transform-origin:0 0;">OIB</div>
<div class="f" style="left:1160px;top:448px;width:637px;height:20px;background:#ebecf0;"></div>
<div class="t" style="left:1163px;top:448px;height:20px;line-height:20px;transform:scaleX(1.0408);transform-origin:0 0;">12345678909</div>
<div style="position:absolute;left:1000px;top:496px;width:821px;height:303px;border:1px solid #5f8cc5;border-radius:3px;background:#c3d4e7;box-shadow:inset 0 0 0 1px #d6e2ef;"></div>
<div style="position:absolute;left:1001px;top:497px;width:819px;height:19px;background:linear-gradient(#c9daee,#b3cae4);border-top:1px solid #dfe9f5;border-radius:2px 2px 0 0;"></div>
<div style="position:absolute;left:1001px;top:516px;width:819px;height:1px;background:#d6e2ef;"></div>
<div class="t" style="left:1012px;top:497px;height:20px;line-height:20px;font-weight:bold;-webkit-text-stroke:0.3px #000;transform:scaleX(1.1216);transform-origin:0 0;">Primatelj</div>
<div style="position:absolute;left:1012px;top:528px;width:797px;height:259px;border:1px solid #5f8cc5;border-radius:3px;background:#c3d4e7;box-shadow:inset 0 0 0 1px #d6e2ef;"></div>
<div style="position:absolute;left:1013px;top:529px;width:795px;height:19px;background:linear-gradient(#c9daee,#b3cae4);border-top:1px solid #dfe9f5;border-radius:2px 2px 0 0;"></div>
<div style="position:absolute;left:1013px;top:548px;width:795px;height:1px;background:#d6e2ef;"></div>
<div class="t" style="left:1024px;top:529px;height:20px;line-height:20px;font-weight:bold;-webkit-text-stroke:0.3px #000;transform:scaleX(1.1257);transform-origin:0 0;">Djelatnik</div>
<div class="t" style="left:1023px;top:561px;height:20px;line-height:20px;transform:scaleX(0.9434);transform-origin:0 0;">Šifra</div>
<div class="f" style="left:1160px;top:560px;width:637px;height:20px;background:#ffffff;"></div>
<div class="t" style="left:1163px;top:560px;height:20px;line-height:20px;transform:scaleX(1.0254);transform-origin:0 0;">001</div>
<svg style="position:absolute;left:1777px;top:562px" width="16" height="16" viewBox="0 0 16 16"><defs><radialGradient id="sg1777562" cx="60%" cy="65%" r="70%"><stop offset="0" stop-color="#c8d8f8"/><stop offset="1" stop-color="#ffffff"/></radialGradient></defs><path d="M10.5 10.5 L13.8 13.8" stroke="#8a6a10" stroke-width="3.6" stroke-linecap="round"/><path d="M10.8 10.8 L13.5 13.5" stroke="#f0c830" stroke-width="2" stroke-linecap="round"/><circle cx="6.8" cy="6.8" r="5.4" fill="url(#sg1777562)" stroke="#7a8490" stroke-width="1.1"/></svg>
<div class="t" style="left:1023px;top:587px;height:21px;line-height:21px;transform:scaleX(0.9315);transform-origin:0 0;">Naziv</div>
<div class="f" style="left:1160px;top:587px;width:637px;height:21px;background:#ffffff;"></div>
<div class="t" style="left:1163px;top:587px;height:21px;line-height:21px;transform:scaleX(1.0057);transform-origin:0 0;">HRVOJE HORVAT</div>
<svg style="position:absolute;left:1777px;top:589px" width="16" height="16" viewBox="0 0 16 16"><defs><radialGradient id="sg1777589" cx="60%" cy="65%" r="70%"><stop offset="0" stop-color="#c8d8f8"/><stop offset="1" stop-color="#ffffff"/></radialGradient></defs><path d="M10.5 10.5 L13.8 13.8" stroke="#8a6a10" stroke-width="3.6" stroke-linecap="round"/><path d="M10.8 10.8 L13.5 13.5" stroke="#f0c830" stroke-width="2" stroke-linecap="round"/><circle cx="6.8" cy="6.8" r="5.4" fill="url(#sg1777589)" stroke="#7a8490" stroke-width="1.1"/></svg>
<svg style="position:absolute;left:1900px;top:1041px" width="4" height="4" viewBox="0 0 4 4"><path d="M0.5 3.5 L3.5 0.5" stroke="#10105a" stroke-width="1.6"/></svg>
<svg style="position:absolute;left:1905px;top:1041px" width="4" height="4" viewBox="0 0 4 4"><path d="M0.5 3.5 L3.5 0.5" stroke="#10105a" stroke-width="1.6"/></svg>
<svg style="position:absolute;left:1910px;top:1041px" width="4" height="4" viewBox="0 0 4 4"><path d="M0.5 3.5 L3.5 0.5" stroke="#10105a" stroke-width="1.6"/></svg>
</body></html>
